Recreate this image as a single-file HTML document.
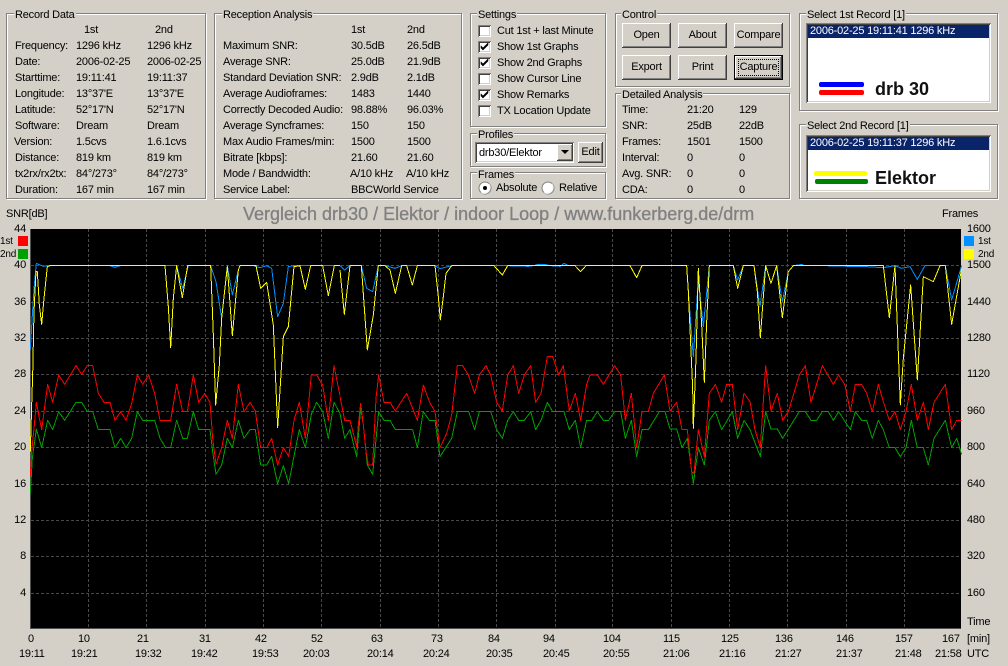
<!DOCTYPE html>
<html><head><meta charset="utf-8"><style>
html,body{margin:0;padding:0;background:#D4D0C8}
#w{position:relative;width:1008px;height:666px;overflow:hidden;background:#D4D0C8;font:11px/13px "Liberation Sans",sans-serif;letter-spacing:-.2px;color:#000}
i{font-style:normal;position:absolute;white-space:nowrap;margin-top:1px}
p{position:absolute;left:0;margin:0;height:13px}
.g{position:absolute;box-sizing:border-box;border:1px solid #808080;box-shadow:1px 1px 0 #fff,inset 1px 1px 0 #fff}
.l{position:absolute;background:#D4D0C8;padding:0 1px;white-space:nowrap}
.b{position:absolute;box-sizing:border-box;width:49px;height:25px;background:#D4D0C8;text-align:center;line-height:25px;box-shadow:inset -1px -1px #404040,inset 1px 1px #fff,inset -2px -2px #808080}
.s{position:absolute;box-sizing:border-box;background:#fff;box-shadow:inset 1px 1px #808080,inset -1px -1px #fff,inset 2px 2px #404040,inset -2px -2px #D4D0C8}
.c{position:absolute;left:478px;width:13px;height:12px}
.k{position:absolute;left:497px;white-space:nowrap}
.ra{text-align:right;width:26px;left:0}
.rb{left:967px}
.m{top:632px}.u{top:647px}
.sel{position:absolute;background:#0A246A;color:#fff;left:808px;width:181px;height:13px;line-height:13px;padding-left:2px;box-sizing:border-box;white-space:nowrap}
.big{position:absolute;left:875px;font:bold 18px/20px "Liberation Sans",sans-serif;letter-spacing:0;color:#111;margin-top:0}
.bar{position:absolute;height:5px;border-radius:2px}
.q{position:absolute;width:10px;height:10px}
</style></head><body><div id="w">

<div class="g" style="left:6px;top:13px;width:200px;height:186px"></div><i class="l" style="left:14px;top:8px">Record Data</i>
<div class="g" style="left:214px;top:13px;width:248px;height:186px"></div><i class="l" style="left:222px;top:8px">Reception Analysis</i>
<div class="g" style="left:470px;top:13px;width:136px;height:114px"></div><i class="l" style="left:477px;top:8px">Settings</i>
<div class="g" style="left:470px;top:133px;width:136px;height:34px"></div><i class="l" style="left:477px;top:128px">Profiles</i>
<div class="g" style="left:470px;top:172px;width:136px;height:27px"></div><i class="l" style="left:477px;top:168px">Frames</i>
<div class="g" style="left:615px;top:13px;width:175px;height:74px"></div><i class="l" style="left:621px;top:8px">Control</i>
<div class="g" style="left:615px;top:93px;width:175px;height:106px"></div><i class="l" style="left:621px;top:88px">Detailed Analysis</i>
<div class="g" style="left:799px;top:13px;width:199px;height:98px"></div><i class="l" style="left:806px;top:8px">Select 1st Record [1]</i>
<div class="g" style="left:799px;top:124px;width:199px;height:75px"></div><i class="l" style="left:806px;top:119px">Select 2nd Record [1]</i>

<i style="left:84px;top:23px">1st</i><i style="left:155px;top:23px">2nd</i>
<p style="top:39px"><i style="left:15px">Frequency:</i><i style="left:76px">1296 kHz</i><i style="left:147px">1296 kHz</i></p>
<p style="top:55px"><i style="left:15px">Date:</i><i style="left:76px">2006-02-25</i><i style="left:147px">2006-02-25</i></p>
<p style="top:71px"><i style="left:15px">Starttime:</i><i style="left:76px">19:11:41</i><i style="left:147px">19:11:37</i></p>
<p style="top:87px"><i style="left:15px">Longitude:</i><i style="left:76px">13°37'E</i><i style="left:147px">13°37'E</i></p>
<p style="top:103px"><i style="left:15px">Latitude:</i><i style="left:76px">52°17'N</i><i style="left:147px">52°17'N</i></p>
<p style="top:119px"><i style="left:15px">Software:</i><i style="left:76px">Dream</i><i style="left:147px">Dream</i></p>
<p style="top:135px"><i style="left:14px">Version:</i><i style="left:76px">1.5cvs</i><i style="left:147px">1.6.1cvs</i></p>
<p style="top:151px"><i style="left:15px">Distance:</i><i style="left:76px">819 km</i><i style="left:147px">819 km</i></p>
<p style="top:167px"><i style="left:15px">tx2rx/rx2tx:</i><i style="left:76px">84°/273°</i><i style="left:147px">84°/273°</i></p>
<p style="top:183px"><i style="left:15px">Duration:</i><i style="left:76px">167 min</i><i style="left:147px">167 min</i></p>

<i style="left:351px;top:23px">1st</i><i style="left:407px;top:23px">2nd</i>
<p style="top:39px"><i style="left:223px">Maximum SNR:</i><i style="left:351px">30.5dB</i><i style="left:407px">26.5dB</i></p>
<p style="top:55px"><i style="left:223px">Average SNR:</i><i style="left:351px">25.0dB</i><i style="left:407px">21.9dB</i></p>
<p style="top:71px"><i style="left:223px">Standard Deviation SNR:</i><i style="left:351px">2.9dB</i><i style="left:407px">2.1dB</i></p>
<p style="top:87px"><i style="left:223px">Average Audioframes:</i><i style="left:351px">1483</i><i style="left:407px">1440</i></p>
<p style="top:103px"><i style="left:223px">Correctly Decoded Audio:</i><i style="left:351px">98.88%</i><i style="left:407px">96.03%</i></p>
<p style="top:119px"><i style="left:223px">Average Syncframes:</i><i style="left:351px">150</i><i style="left:407px">150</i></p>
<p style="top:135px"><i style="left:223px">Max Audio Frames/min:</i><i style="left:351px">1500</i><i style="left:407px">1500</i></p>
<p style="top:151px"><i style="left:223px">Bitrate [kbps]:</i><i style="left:351px">21.60</i><i style="left:407px">21.60</i></p>
<p style="top:167px"><i style="left:223px">Mode / Bandwidth:</i><i style="left:350px">A/10 kHz</i><i style="left:406px">A/10 kHz</i></p>
<p style="top:183px"><i style="left:223px">Service Label:</i><i style="left:351px">BBCWorld Service</i></p>

<div class="s c" style="top:25px"></div><i class="k" style="top:24px">Cut 1st + last Minute</i>
<div class="s c" style="top:41px"><svg width="13" height="12" style="position:absolute;left:0;top:0"><path d="M3 5l2 2 5-5v2l-5 5-2-2z" fill="#000" stroke="#000" stroke-width=".6"/></svg></div><i class="k" style="top:40px">Show 1st Graphs</i>
<div class="s c" style="top:57px"><svg width="13" height="12" style="position:absolute;left:0;top:0"><path d="M3 5l2 2 5-5v2l-5 5-2-2z" fill="#000" stroke="#000" stroke-width=".6"/></svg></div><i class="k" style="top:56px">Show 2nd Graphs</i>
<div class="s c" style="top:73px"></div><i class="k" style="top:72px">Show Cursor Line</i>
<div class="s c" style="top:89px"><svg width="13" height="12" style="position:absolute;left:0;top:0"><path d="M3 5l2 2 5-5v2l-5 5-2-2z" fill="#000" stroke="#000" stroke-width=".6"/></svg></div><i class="k" style="top:88px">Show Remarks</i>
<div class="s c" style="top:105px"></div><i class="k" style="top:104px">TX Location Update</i>

<div class="s" style="left:475px;top:142px;width:99px;height:21px"></div>
<i style="left:479px;top:146px">drb30/Elektor</i>
<div class="b" style="left:557px;top:144px;width:16px;height:17px"></div>
<svg width="9" height="5" style="position:absolute;left:561px;top:150px"><path d="M0 0h8l-4 4z" fill="#000"/></svg>
<div class="b" style="left:578px;top:142px;width:25px;height:21px;line-height:21px">Edit</div>

<svg width="14" height="14" style="position:absolute;left:478px;top:181px"><circle cx="7" cy="7" r="6" fill="#fff" stroke="#808080"/><path d="M11 2.800A6 6 0 0 1 3 11.500" fill="none" stroke="#eee"/><circle cx="7" cy="7" r="2" fill="#000"/></svg>
<i style="left:496px;top:181px">Absolute</i>
<svg width="14" height="14" style="position:absolute;left:541px;top:181px"><circle cx="7" cy="7" r="6" fill="#fff" stroke="#808080"/><path d="M11 2.800A6 6 0 0 1 3 11.500" fill="none" stroke="#eee"/></svg>
<i style="left:559px;top:181px">Relative</i>

<div class="b" style="left:622px;top:23px">Open</div>
<div class="b" style="left:678px;top:23px">About</div>
<div class="b" style="left:734px;top:23px">Compare</div>
<div class="b" style="left:622px;top:55px">Export</div>
<div class="b" style="left:678px;top:55px">Print</div>
<div class="b" style="left:734px;top:55px;box-shadow:inset 0 0 0 1px #000,inset -2px -2px #404040,inset 2px 2px #fff,inset -3px -3px #808080">Capture<div style="position:absolute;left:4px;top:4px;right:4px;bottom:4px;border:1px dotted #000"></div></div>

<p style="top:103px"><i style="left:622px">Time:</i><i style="left:687px">21:20</i><i style="left:739px">129</i></p>
<p style="top:119px"><i style="left:622px">SNR:</i><i style="left:687px">25dB</i><i style="left:739px">22dB</i></p>
<p style="top:135px"><i style="left:622px">Frames:</i><i style="left:687px">1501</i><i style="left:739px">1500</i></p>
<p style="top:151px"><i style="left:622px">Interval:</i><i style="left:687px">0</i><i style="left:739px">0</i></p>
<p style="top:167px"><i style="left:622px">Avg. SNR:</i><i style="left:687px">0</i><i style="left:739px">0</i></p>
<p style="top:183px"><i style="left:622px">CDA:</i><i style="left:687px">0</i><i style="left:739px">0</i></p>

<div class="s" style="left:806px;top:23px;width:185px;height:80px"></div>
<div class="sel" style="top:25px">2006-02-25 19:11:41 1296 kHz</div>
<div class="bar" style="left:819px;top:82px;width:45px;background:#0000FF"></div>
<div class="bar" style="left:819px;top:90px;width:45px;background:#FF0000"></div>
<i class="big" style="top:79px">drb 30</i>

<div class="s" style="left:806px;top:135px;width:185px;height:57px"></div>
<div class="sel" style="top:137px">2006-02-25 19:11:37 1296 kHz</div>
<div class="bar" style="left:814px;top:171px;width:53px;background:#FFFF00"></div>
<div class="bar" style="left:815px;top:179px;width:53px;background:#008000"></div>
<i class="big" style="top:168px">Elektor</i>

<i style="left:6px;top:207px">SNR[dB]</i>
<i style="left:942px;top:207px">Frames</i>
<i style="left:243px;top:203px;font-size:18px;line-height:20px;letter-spacing:0;color:#808080;-webkit-text-stroke:.3px #808080">Vergleich drb30 / Elektor / indoor Loop / www.funkerberg.de/drm</i>

<div style="position:absolute;left:30px;top:229px;width:931px;height:400px;background:#000;box-sizing:border-box;border-left:1px solid #505050;border-bottom:1px solid #505050"></div>

<svg width="1008" height="666" style="position:absolute;left:0;top:0">
<g stroke="#484848" stroke-width="1" stroke-dasharray="3 2" shape-rendering="crispEdges" fill="none">
<path d="M31 265.500H961M31 302.500H961M31 338.500H961M31 374.500H961M31 411.500H961M31 447.500H961M31 484.500H961M31 520.500H961M31 556.500H961M31 593.500H961"/>
<path d="M88.500 229V628M146.500 229V628M205.500 229V628M263.500 229V628M321.500 229V628M380.500 229V628M438.500 229V628M496.500 229V628M555.500 229V628M612.500 229V628M671.500 229V628M729.500 229V628M787.500 229V628M846.500 229V628M904.500 229V628"/>
</g>
<g fill="none" stroke-width="1" shape-rendering="crispEdges" stroke-linejoin="round">
<g transform="translate(0,225) scale(.33333)">
<polyline vector-effect="non-scaling-stroke" stroke="#00A000" points="91,805 97,700 109,612 125,668 143,586 158,614 176,560 194,586 228,532 245,532 262,560 278,560 295,614 330,614 345,668 362,640 378,668 395,640 412,560 428,586 464,586 480,640 497,668 512,668 530,586 548,640 562,640 580,560 596,614 630,614 638,680 648,748 665,720 682,640 697,668 715,586 732,640 750,614 766,614 782,720 800,720 815,694 833,776 850,722 866,776 882,694 898,614 916,668 934,568 950,532 968,560 985,640 1002,532 1020,565"/>
<polyline vector-effect="non-scaling-stroke" stroke="#FF0000" points="91,750 95,680 103,600 109,532 125,614 143,478 158,532 176,450 194,478 228,422 245,448 262,422 278,422 295,505 312,532 330,532 345,586 362,560 378,586 395,535 412,450 428,478 446,450 464,505 480,586 512,586 530,478 548,560 562,560 580,450 596,532 614,505 630,532 638,640 648,718 665,668 682,586 697,640 715,478 732,560 750,532 766,558 782,668 800,668 815,640 833,720 850,668 866,694 882,586 898,532 916,640 934,450 950,450 968,480 985,586 1002,422 1020,512"/>
<polyline vector-effect="non-scaling-stroke" stroke="#0090FF" points="91,375 97,270 103,180 109,115 120,120 130,124 150,122 330,122 345,127 360,122 475,122 530,122 548,190 565,122 632,122 648,170 665,280 682,122 697,210 715,135 720,122 760,122 780,128 800,122 815,130 833,275 850,235 865,125 880,122 1020,122"/>
<polyline vector-effect="non-scaling-stroke" stroke="#FFFF00" points="91,680 95,540 98,450 102,260 108,140 112,140 118,240 125,298 132,220 142,125 150,122 495,122 505,245 512,368 520,220 530,122 547,218 563,122 632,122 640,330 647,540 658,420 665,280 682,125 697,332 715,135 720,122 768,122 782,190 800,172 820,300 833,608 850,335 865,305 882,125 900,122 916,193 932,122 968,122 985,212 1003,122 1020,122"/>
</g>
<g transform="translate(340,225) scale(.33333)">
<polyline vector-effect="non-scaling-stroke" stroke="#00A000" points="0,565 14,640 30,614 50,695 62,550 70,600 82,720 98,748 116,560 132,586 150,586 166,614 218,614 232,668 250,560 268,586 285,586 300,695 335,640 352,560 386,560 404,614 418,560 452,560 470,614 487,640 503,586 520,560 536,586 553,586 572,560 587,614 603,586 622,532 638,560 672,560 688,614 706,586 722,668 740,586 755,586 772,560 790,586 806,586 824,560 842,560 856,640 874,586 890,695 906,614 925,614 958,560 975,560 990,612"/>
<polyline vector-effect="non-scaling-stroke" stroke="#FF0000" points="0,515 14,586 30,586 50,665 55,600 62,535 70,600 78,680 85,720 98,720 108,520 116,450 132,532 150,532 166,558 200,505 232,586 250,480 268,530 285,560 300,668 320,625 335,570 352,422 368,422 385,450 404,505 418,450 438,422 452,450 470,532 487,558 503,450 520,422 536,505 553,450 572,422 587,532 603,505 622,395 638,395 656,450 670,422 688,558 706,505 722,586 740,478 750,450 772,450 790,478 824,422 842,450 856,586 874,505 890,668 906,560 925,560 940,505 955,480 973,450 990,558"/>
<polyline vector-effect="non-scaling-stroke" stroke="#0090FF" points="0,122 14,135 30,122 64,122 80,190 98,200 115,122 135,122 165,130 185,122 232,122 285,122 300,131 335,122 470,122 500,122 565,124 580,122 595,118 615,118 630,122 660,124 672,115 685,122 990,122"/>
<polyline vector-effect="non-scaling-stroke" stroke="#FFFF00" points="0,135 13,268 30,122 64,122 82,375 100,270 115,122 135,122 150,135 166,205 185,122 200,122 217,180 232,122 285,122 295,215 301,285 310,215 318,145 335,122 462,122 487,150 503,122 705,122 722,140 738,122 870,122 890,158 906,122 985,122 990,122"/>
</g>
<g transform="translate(670,225) scale(.33333)">
<polyline vector-effect="non-scaling-stroke" stroke="#00A000" points="0,612 20,612 36,668 52,640 70,775 85,668 103,720 118,586 136,560 155,614 187,560 203,640 222,586 240,614 271,695 287,560 303,612 322,612 338,640 388,560 406,560 423,586 440,586 457,560 475,560 490,586 506,560 541,614 556,560 575,586 590,586 607,640 625,586 640,614 658,668 675,668 691,695 708,668 724,586 742,668 760,668 775,720 792,640 826,586 845,668 860,640 875,688"/>
<polyline vector-effect="non-scaling-stroke" stroke="#FF0000" points="0,558 20,532 36,614 52,614 65,740 72,745 85,614 103,695 118,505 136,478 155,532 170,478 187,478 203,614 222,505 240,530 255,614 271,668 287,422 303,558 322,505 338,586 355,560 388,450 406,422 423,532 457,422 490,478 506,450 525,480 541,560 556,478 575,478 590,505 607,560 625,478 640,530 658,586 675,560 691,614 708,560 724,478 742,586 760,532 775,614 792,532 826,478 845,614 860,586 875,586"/>
<polyline vector-effect="non-scaling-stroke" stroke="#0090FF" points="0,122 50,122 58,240 70,395 80,240 85,160 100,305 118,122 190,122 203,165 220,122 252,122 270,245 287,122 320,122 337,230 355,140 370,122 398,118 400,122 465,122 535,124 590,125 640,128 675,122 695,130 720,125 742,163 765,122 826,122 845,225 875,122"/>
<polyline vector-effect="non-scaling-stroke" stroke="#FFFF00" points="0,122 50,122 55,200 68,490 70,610 78,400 85,130 95,300 103,472 110,290 118,122 190,122 203,190 220,122 252,122 262,200 271,338 287,122 303,175 320,122 337,278 355,140 370,122 640,122 658,278 675,122 691,540 700,400 722,180 742,465 760,155 790,170 810,122 826,122 845,298 875,130"/>
</g>
</g>
</svg>

<i class="ra" style="top:222px">44</i><i class="ra" style="top:258px">40</i><i class="ra" style="top:295px">36</i><i class="ra" style="top:331px">32</i><i class="ra" style="top:367px">28</i><i class="ra" style="top:404px">24</i><i class="ra" style="top:440px">20</i><i class="ra" style="top:477px">16</i><i class="ra" style="top:513px">12</i><i class="ra" style="top:549px">8</i><i class="ra" style="top:586px">4</i>
<i style="left:0;top:234px;font-size:10px">1st</i><div class="q" style="left:18px;top:236px;background:#FF0000"></div>
<i style="left:0;top:247px;font-size:10px">2nd</i><div class="q" style="left:18px;top:249px;background:#00A000"></div>
<i class="rb" style="top:222px">1600</i><i class="rb" style="top:258px">1500</i><i class="rb" style="top:295px">1440</i><i class="rb" style="top:331px">1280</i><i class="rb" style="top:367px">1120</i><i class="rb" style="top:404px">960</i><i class="rb" style="top:440px">800</i><i class="rb" style="top:477px">640</i><i class="rb" style="top:513px">480</i><i class="rb" style="top:549px">320</i><i class="rb" style="top:586px">160</i><i class="rb" style="top:615px">Time</i>
<div class="q" style="left:964px;top:236px;background:#0090FF"></div><i style="left:978px;top:234px;font-size:10px">1st</i>
<div class="q" style="left:964px;top:249px;background:#FFFF00"></div><i style="left:978px;top:247px;font-size:10px">2nd</i>

<i class="m" style="left:28px">0</i><i class="m" style="left:78px">10</i><i class="m" style="left:137px">21</i><i class="m" style="left:199px">31</i><i class="m" style="left:255px">42</i><i class="m" style="left:311px">52</i><i class="m" style="left:371px">63</i><i class="m" style="left:431px">73</i><i class="m" style="left:488px">84</i><i class="m" style="left:543px">94</i><i class="m" style="left:603px">104</i><i class="m" style="left:663px">115</i><i class="m" style="left:721px">125</i><i class="m" style="left:775px">136</i><i class="m" style="left:836px">146</i><i class="m" style="left:895px">157</i><i class="m" style="left:942px">167</i><i class="m" style="left:967px">[min]</i>
<i class="u" style="left:19px">19:11</i><i class="u" style="left:71px">19:21</i><i class="u" style="left:135px">19:32</i><i class="u" style="left:191px">19:42</i><i class="u" style="left:252px">19:53</i><i class="u" style="left:303px">20:03</i><i class="u" style="left:367px">20:14</i><i class="u" style="left:423px">20:24</i><i class="u" style="left:486px">20:35</i><i class="u" style="left:543px">20:45</i><i class="u" style="left:603px">20:55</i><i class="u" style="left:663px">21:06</i><i class="u" style="left:719px">21:16</i><i class="u" style="left:775px">21:27</i><i class="u" style="left:836px">21:37</i><i class="u" style="left:895px">21:48</i><i class="u" style="left:935px">21:58</i><i class="u" style="left:967px">UTC</i>
</div></body></html>
